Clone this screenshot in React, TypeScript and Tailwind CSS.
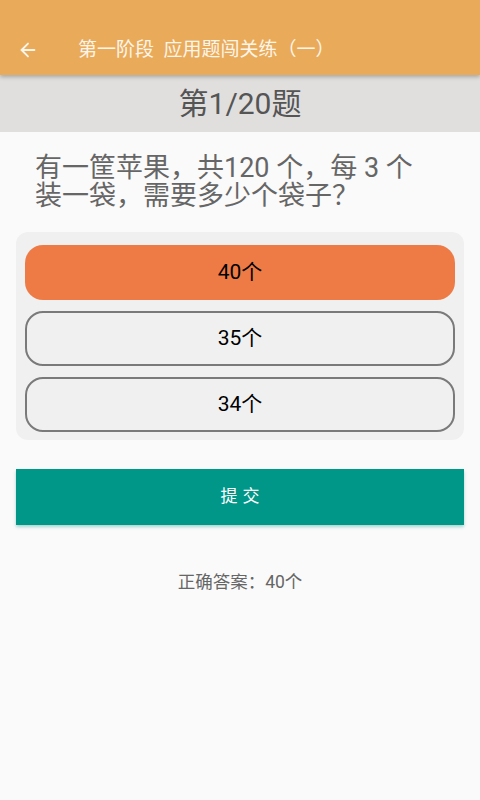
import { ArrowLeft } from "lucide-react";

const FONT = { fontFamily: '"Roboto", "Noto Sans CJK SC", sans-serif' };

const options = [
  { label: "40个", selected: true },
  { label: "35个", selected: false },
  { label: "34个", selected: false },
];

export default function App() {
  return (
    <div className="w-[480px] h-[800px] bg-[#fafafa] flex flex-col" style={FONT}>
      {/* Toolbar */}
      <div className="h-[75px] bg-[#e9ab5a] flex items-center pt-[24px] shadow-[0_2px_4px_rgba(0,0,0,0.25)] relative z-10">
        <ArrowLeft className="ml-[17px] w-[22px] h-[22px] text-[#fdf5ea]" strokeWidth={2} />
        <span className="ml-[39px] text-[19px] leading-[24px] text-[#fdf5ea]">第一阶段&nbsp;&nbsp;应用题闯关练（一）</span>
      </div>

      {/* Progress */}
      <div className="h-[57px] bg-[#e0dfde] flex items-center justify-center">
        <span className="text-[30px] text-[#555555]">第1/20题</span>
      </div>

      {/* Question */}
      <p className="pl-[35px] pr-[50px] pt-[22px] text-[27px] leading-[28px] text-[#666666]">
        有一筐苹果，共120 个，每 3 个装一袋，需要多少个袋子？
      </p>

      {/* Options */}
      <div className="mx-[16px] mt-[22px] bg-[#f0f0f0] rounded-[12px] px-[9px] pt-[13px] pb-[8px] flex flex-col gap-[11px]">
        {options.map((o) =>
          o.selected ? (
            <div
              key={o.label}
              className="h-[55px] rounded-[18px] bg-[#ee7b45] flex items-center justify-center text-[21px] text-black"
            >
              {o.label}
            </div>
          ) : (
            <div
              key={o.label}
              className="h-[55px] rounded-[18px] border-2 border-[#7a7a7a] bg-[#f0f0f0] flex items-center justify-center text-[21px] text-black"
            >
              {o.label}
            </div>
          )
        )}
      </div>

      {/* Submit */}
      <button className="mx-[16px] mt-[29px] h-[56px] bg-[#009688] text-white text-[17px] tracking-[5px] pl-[5px] shadow-[0_2px_3px_rgba(0,150,136,0.35)]">
        提交
      </button>

      {/* Answer */}
      <div className="mt-[44px] text-center text-[17.5px] text-[#666666]">正确答案：40个</div>
    </div>
  );
}
